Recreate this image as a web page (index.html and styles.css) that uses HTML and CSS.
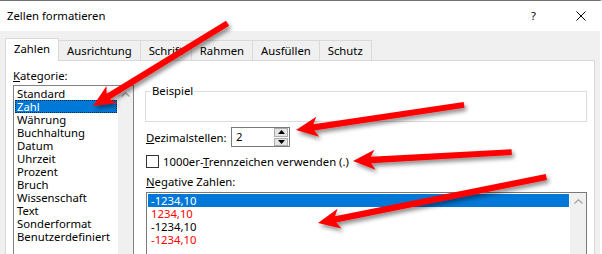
FILE: index.html
```html
<!DOCTYPE html>
<html lang="de">
<head>
    <meta charset="UTF-8">
    <title>Zellen formatieren</title>
    <link rel="stylesheet" href="styles.css">
</head>
<body>
    <div class="dialog">
        <div class="titlebar">
            <span class="title">Zellen formatieren</span>
            <span class="help">?</span>
            <svg class="close" width="10" height="10" viewBox="0 0 10 10">
                <path d="M0.5 0.5 L9.5 9.5 M9.5 0.5 L0.5 9.5" stroke="#000" stroke-width="1" fill="none"/>
            </svg>
        </div>

        <div class="body">
            <ul class="tabs">
                <li class="tab active">Zahlen</li>
                <li class="tab">Ausrichtung</li>
                <li class="tab">Schrift</li>
                <li class="tab">Rahmen</li>
                <li class="tab">Ausfüllen</li>
                <li class="tab">Schutz</li>
            </ul>

            <div class="panel">
                <div class="category">
                    <div class="label"><u>K</u>ategorie:</div>
                    <div class="listbox">
                        <ul class="items">
                            <li>Standard</li>
                            <li class="selected">Zahl</li>
                            <li>Währung</li>
                            <li>Buchhaltung</li>
                            <li>Datum</li>
                            <li>Uhrzeit</li>
                            <li>Prozent</li>
                            <li>Bruch</li>
                            <li>Wissenschaft</li>
                            <li>Text</li>
                            <li>Sonderformat</li>
                            <li>Benutzerdefiniert</li>
                        </ul>
                        <div class="scrollbar">
                            <svg width="9" height="5" viewBox="0 0 9 5"><path d="M0.5 4.5 L4.5 0.8 L8.5 4.5" stroke="#a6a6a6" stroke-width="1.4" fill="none"/></svg>
                        </div>
                    </div>
                </div>

                <div class="details">
                    <fieldset class="sample">
                        <legend>Beispiel</legend>
                        <div class="sample-value"></div>
                    </fieldset>

                    <div class="row decimals">
                        <span class="row-label"><u>D</u>ezimalstellen:</span>
                        <div class="spin">
                            <span class="spin-value">2</span>
                            <div class="spin-btns">
                                <span class="spin-btn"><svg width="7" height="4" viewBox="0 0 7 4"><path d="M0 4 L3.5 0 L7 4 Z" fill="#000"/></svg></span>
                                <span class="spin-btn"><svg width="7" height="4" viewBox="0 0 7 4"><path d="M0 0 L3.5 4 L7 0 Z" fill="#000"/></svg></span>
                            </div>
                        </div>
                    </div>

                    <div class="row check">
                        <span class="checkbox"></span>
                        <span>1000er-<u>T</u>rennzeichen verwenden (.)</span>
                    </div>

                    <div class="label neg-label"><u>N</u>egative Zahlen:</div>
                    <div class="listbox neg-list">
                        <ul class="items">
                            <li class="selected">-1234,10</li>
                            <li class="red">1234,10</li>
                            <li>-1234,10</li>
                            <li class="red">-1234,10</li>
                        </ul>
                        <div class="scrollbar">
                            <svg width="9" height="5" viewBox="0 0 9 5"><path d="M0.5 4.5 L4.5 0.8 L8.5 4.5" stroke="#a6a6a6" stroke-width="1.4" fill="none"/></svg>
                        </div>
                    </div>
                </div>
            </div>
        </div>

        <!-- annotation arrows drawn on top of the dialog -->
        <svg class="arrows" width="602" height="254" viewBox="0 0 602 254">
            <defs>
                <filter id="shadow" x="-20%" y="-50%" width="140%" height="200%">
                    <feDropShadow dx="2" dy="3" stdDeviation="2" flood-color="#000" flood-opacity="0.45"/>
                </filter>
            </defs>
            <g fill="#ff0000" filter="url(#shadow)">
                <g transform="translate(93,106) rotate(148.4)">
                    <polygon points="0,0 -22,-10 -18,-3.2 -158,-3 -158,3 -18,3.2 -22,10"/>
                </g>
                <g transform="translate(296,130) rotate(171.5)">
                    <polygon points="0,0 -22,-10 -18,-3.2 -170,-3 -170,3 -18,3.2 -22,10"/>
                </g>
                <g transform="translate(353,161) rotate(176.8)">
                    <polygon points="0,0 -22,-10 -18,-3.2 -159,-3 -159,3 -18,3.2 -22,10"/>
                </g>
                <g transform="translate(318,223) rotate(168.6)">
                    <polygon points="0,0 -22,-10 -18,-3.2 -233,-3 -233,3 -18,3.2 -22,10"/>
                </g>
            </g>
        </svg>
    </div>
</body>
</html>
```

FILE: styles.css
```css
* {
    box-sizing: border-box;
}

body {
    margin: 0;
    font-family: "Noto Sans", sans-serif;
    font-size: 11.3px;
    color: #000;
}

.dialog {
    position: relative;
    width: 602px;
    height: 254px;
    overflow: hidden;
    background: #f0f0f0;
    border-top: 1px solid #6f6f6f;
    border-right: 2px solid #fff;
}

/* Title bar */
.titlebar {
    height: 30px;
    background: #fff;
    display: flex;
    align-items: center;
    padding: 0 0 1px 7px;
}

.title {
    flex: 1;
}

.help {
    margin-right: 40px;
}

.close {
    margin-right: 14px;
}

/* Tabs */
.body {
    padding: 7px 5px 0 5px;
}

.tabs {
    list-style: none;
    margin: 0;
    padding: 0;
    display: flex;
    align-items: flex-end;
}

.tab {
    height: 20px;
    line-height: 19px;
    padding: 0 8px;
    border: 1px solid #d9d9d9;
    border-bottom: none;
    margin-right: -1px;
    background: #f0f0f0;
}

.tab.active {
    position: relative;
    z-index: 1;
    height: 23px;
    padding-bottom: 3px;
    margin-bottom: -1px;
    background: #fff;
}

/* Panel */
.panel {
    display: flex;
    gap: 11px;
    height: 260px;
    padding: 7px 7px 0 7px;
    background: #fff;
    border: 1px solid #d9d9d9;
}

.label {
    line-height: 15px;
    margin-bottom: 2px;
}

.category {
    width: 121px;
}

.listbox {
    display: flex;
    height: 200px;
    border: 1px solid #828282;
}

.items {
    flex: 1;
    list-style: none;
    margin: 0;
    padding: 1px;
}

.items li {
    height: 13px;
    line-height: 13px;
    padding-left: 2px;
    white-space: nowrap;
}

.items li.selected {
    background: #0078d7;
    color: #fff;
    outline: 1px dotted #0a2a4a;
    outline-offset: -1px;
}

.neg-list .items li {
    padding-left: 3px;
}

.neg-list .items li.selected {
    outline: none;
}

.items li.red {
    color: #ff0000;
}

.scrollbar {
    width: 15px;
    background: #f0f0f0;
    display: flex;
    justify-content: center;
    padding-top: 6px;
}

.details {
    flex: 1;
    padding-top: 16px;
}

/* Beispiel group */
.sample {
    margin: 0;
    padding: 0;
    border: 1px solid #dcdcdc;
    min-inline-size: 0;
}

.sample legend {
    line-height: 14px;
    padding: 0 1px;
    margin-left: 5px;
}

.sample-value {
    height: 23px;
}

.row {
    display: flex;
    align-items: center;
}

.decimals {
    margin-top: 5px;
}

.row-label {
    width: 86px;
    padding-left: 1px;
}

.spin {
    display: flex;
    width: 59px;
    height: 20px;
    border: 1px solid #7a7a7a;
}

.spin-value {
    flex: 1;
    padding-left: 4px;
    line-height: 17px;
}

.spin-btns {
    width: 15px;
    display: flex;
    flex-direction: column;
    gap: 1px;
    padding: 0 1px 0 0;
}

.spin-btn {
    flex: 1;
    display: flex;
    align-items: center;
    justify-content: center;
    background: #e5e5e5;
    border: 1px solid #adadad;
}

.check {
    margin-top: 7px;
    gap: 4px;
}

.checkbox {
    width: 13px;
    height: 13px;
    border: 1px solid #333;
    margin-left: 1px;
}

.neg-label {
    margin-top: 5px;
    margin-bottom: 3px;
    padding-left: 1px;
}

.neg-list {
    border-color: #7a7a7a;
    margin-left: 1px;
}

.neg-list .scrollbar {
    width: 16px;
}

/* Annotation overlay */
.arrows {
    position: absolute;
    top: -1px;
    left: 0;
    pointer-events: none;
}
```
